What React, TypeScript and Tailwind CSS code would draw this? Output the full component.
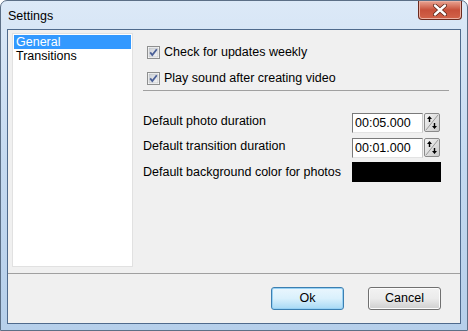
import React from "react";

const font = { fontFamily: '"Liberation Sans", Arial, sans-serif' };

function CheckBox() {
    return (
        <svg width="13" height="13" viewBox="0 0 13 13" className="shrink-0">
            <defs>
                <linearGradient id="cbg" x1="0" y1="0" x2="1" y2="1">
                    <stop offset="0" stopColor="#cbcfd5" />
                    <stop offset="1" stopColor="#f6f6f6" />
                </linearGradient>
            </defs>
            <rect x="0.5" y="0.5" width="12" height="12" fill="#fff" stroke="#8e8f8f" />
            <rect x="2" y="2" width="9" height="9" fill="url(#cbg)" stroke="#b5b8bd" strokeWidth="0.6" />
            <path d="M3.2 6.4 L5.3 9 L9.8 3.3" fill="none" stroke="#4a5f97" strokeWidth="1.8" />
        </svg>
    );
}

function SpinButton() {
    return (
        <svg width="16" height="19" viewBox="0 0 16 19" className="shrink-0">
            <defs>
                <linearGradient id="spg" x1="0" y1="0" x2="1" y2="1">
                    <stop offset="0" stopColor="#f4f4f4" />
                    <stop offset="1" stopColor="#c9c9c9" />
                </linearGradient>
            </defs>
            <rect x="0.5" y="0.5" width="15" height="18" rx="1.5" fill="url(#spg)" stroke="#8a8a8a" />
            <path d="M14 2 L2 17" stroke="#9a9a9a" strokeWidth="1" />
            <path d="M5.5 3 L3 6 H4.8 V9 H6.2 V6 H8 Z" fill="#000" />
            <path d="M10.5 16 L8 13 H9.8 V10 H11.2 V13 H13 Z" fill="#000" />
        </svg>
    );
}

function TimeField(props: { value: string }) {
    return (
        <div className="flex items-start gap-px">
            <div className="flex h-[20px] w-[71px] items-center border border-[#7a7a7a] border-r-[#c8c8c8] border-b-[#e3e3e3] bg-white pl-[2px] text-[12.5px] text-black">
                {props.value}
            </div>
            <SpinButton />
        </div>
    );
}

function WinButton(props: { label: string; focused?: boolean }) {
    const { label, focused } = props;
    return (
        <div
            className={
                focused
                    ? "flex h-[23px] w-[73px] items-center justify-center rounded-[3px] border border-[#3c7fb1] bg-gradient-to-b from-[#eaf6fd] via-[#d9f0fc] to-[#a7d9f5] text-[12.5px] text-black shadow-[inset_0_0_0_1px_#97d1f4]"
                    : "flex h-[23px] w-[73px] items-center justify-center rounded-[3px] border border-[#707070] bg-gradient-to-b from-[#f2f2f2] via-[#ebebeb] to-[#cfcfcf] text-[12.5px] text-black shadow-[inset_0_0_0_1px_#fcfcfc]"
            }
        >
            {label}
        </div>
    );
}

export default function App() {
    return (
        <div className="h-[331px] w-[468px] overflow-hidden bg-white" style={font}>
            <div className="flex h-[331px] w-[468px] flex-col rounded-t-[7px] border border-[#5c6f86] bg-gradient-to-b from-[#dce9f7] via-[#c4d9f0] to-[#b6cfea]">
                {/* title bar */}
                <div className="flex h-[28px] shrink-0 items-start justify-between">
                    <div className="pl-[7px] pt-[6px] text-[12.5px] text-black">Settings</div>
                    <div className="mr-[5px] flex h-[19px] w-[44px] items-center justify-center rounded-b-[4px] border border-t-0 border-[#6b2a1e] bg-gradient-to-b from-[#e8a493] via-[#c7503a] to-[#d2634a] shadow-[inset_0_0_0_1px_#ecb0a2]">
                        <svg width="14" height="12" viewBox="0 0 14 12">
                            <path d="M2 1.5 L12 10.5 M12 1.5 L2 10.5" stroke="#5a2418" strokeWidth="4" strokeLinecap="round" />
                            <path d="M2 1.5 L12 10.5 M12 1.5 L2 10.5" stroke="#fff" strokeWidth="2.4" strokeLinecap="round" />
                        </svg>
                    </div>
                </div>
                {/* client area */}
                <div className="mx-[6px] mb-[6px] flex flex-1 flex-col border border-[#4f6a8c] bg-[#f0f0f0]">
                    <div className="flex h-[243px] gap-[10px] pl-[4px] pt-[3px]">
                        <div className="h-[234px] w-[121px] border border-[#e1e1e1] bg-white p-px text-[12.5px] leading-[14px]">
                            <div className="h-[14px] bg-[#3399ff] pl-[2px] text-white">General</div>
                            <div className="h-[14px] pl-[2px] text-black">Transitions</div>
                        </div>
                        <div className="flex w-[307px] flex-col pt-[11px] text-[12.5px] leading-[16px] text-black">
                            <div className="flex h-[16px] items-center gap-[4px] pl-[4px]">
                                <CheckBox />
                                <span>Check for updates weekly</span>
                            </div>
                            <div className="mt-[10px] flex h-[16px] items-center gap-[4px] pl-[4px]">
                                <CheckBox />
                                <span>Play sound after creating video</span>
                            </div>
                            <div className="mt-[4px] h-px w-[306px] bg-[#a0a0a0]" />
                            <div className="mt-[22px] flex h-[20px] items-start justify-between pr-[10px]">
                                <span>Default photo duration</span>
                                <TimeField value="00:05.000" />
                            </div>
                            <div className="mt-[5px] flex h-[20px] items-start justify-between pr-[10px]">
                                <span>Default transition duration</span>
                                <TimeField value="00:01.000" />
                            </div>
                            <div className="mt-[4px] flex h-[20px] items-center justify-between pr-[9px]">
                                <span>Default background color for photos</span>
                                <div className="h-[20px] w-[89px] bg-black" />
                            </div>
                        </div>
                    </div>
                    <div className="h-px w-full bg-[#a0a0a0]" />
                    <div className="flex flex-1 items-start justify-end gap-[24px] pr-[19px] pt-[13px]">
                        <WinButton label="Ok" focused />
                        <WinButton label="Cancel" />
                    </div>
                </div>
            </div>
        </div>
    );
}
